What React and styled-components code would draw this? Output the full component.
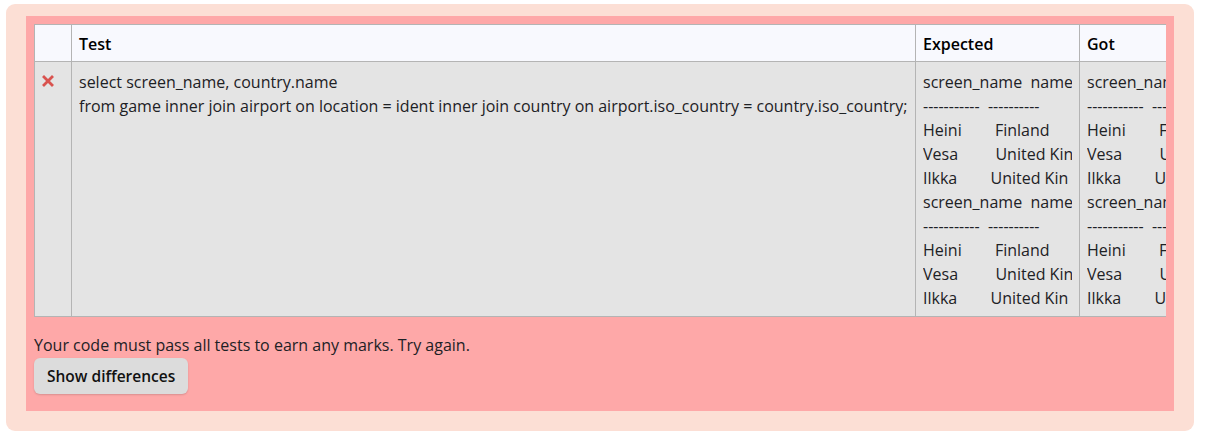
import React from "react";
import styled, { createGlobalStyle } from "styled-components";

const GlobalStyle = createGlobalStyle`
  body {
    margin: 0;
    background: #ffffff;
    font-family: "Open Sans", "DejaVu Sans", sans-serif;
  }
`;

const output = [
  "screen_name  name",
  "-----------  ----------",
  "Heini        Finland",
  "Vesa         United Kin",
  "Ilkka        United Kin",
].join("\n");

const query =
  "select screen_name, country.name\nfrom game inner join airport on location = ident inner join country on airport.iso_country = country.iso_country;";

function CrossIcon() {
  return (
    <svg width="12" height="12" viewBox="0 0 12 12">
      <path
        d="M2 2 L10 10 M10 2 L2 10"
        stroke="#d9534f"
        strokeWidth="2.8"
        strokeLinecap="square"
      />
    </svg>
  );
}

function App() {
  return (
    <>
      <GlobalStyle />
      <Outer>
        <Feedback>
          <TableWrap>
            <Results>
              <colgroup>
                <col style={{ width: 37 }} />
                <col style={{ width: 844 }} />
                <col style={{ width: 164 }} />
                <col style={{ width: 164 }} />
              </colgroup>
              <thead>
                <tr>
                  <Th />
                  <Th>Test</Th>
                  <Th>Expected</Th>
                  <Th>Got</Th>
                </tr>
              </thead>
              <tbody>
                <tr>
                  <Td>
                    <IconCell>
                      <CrossIcon />
                    </IconCell>
                  </Td>
                  <Td>
                    <Pre>{query}</Pre>
                  </Td>
                  <Td>
                    <Pre>{output + "\n" + output}</Pre>
                  </Td>
                  <Td>
                    <Pre>{output + "\n" + output}</Pre>
                  </Td>
                </tr>
              </tbody>
            </Results>
          </TableWrap>
          <Message>Your code must pass all tests to earn any marks. Try again.</Message>
          <Button>Show differences</Button>
        </Feedback>
      </Outer>
    </>
  );
}

export default App;

const Outer = styled.div`
  width: 1188px;
  box-sizing: border-box;
  margin: 4px 0 0 6px;
  padding: 12px 20px 20px 20px;
  background: #fcdfd5;
  border-radius: 9px;
`;

const Feedback = styled.div`
  background: #fea8a8;
  padding: 8px 8px 17px 8px;
  display: flex;
  flex-direction: column;
  align-items: flex-start;
`;

const TableWrap = styled.div`
  width: 100%;
  overflow: hidden;
`;

const Results = styled.table`
  table-layout: fixed;
  width: 1209px;
  border-collapse: collapse;
  font-size: 16px;
  line-height: 24px;
  color: #1d2125;
`;

const Th = styled.th`
  background: #f8f9fe;
  border: 1px solid #b4b4b4;
  padding: 7px 7px 5px 7px;
  text-align: left;
  font-weight: 600;
  color: #000;
`;

const Td = styled.td`
  background: #e4e4e4;
  border: 1px solid #b4b4b4;
  padding: 8px 7px 6px 7px;
  vertical-align: top;
`;

const IconCell = styled.div`
  display: flex;
  padding-top: 5px;
`;

const Pre = styled.div`
  white-space: pre;
  overflow: hidden;
  font-family: "Open Sans", sans-serif;
`;

const Message = styled.div`
  margin-top: 16px;
  font-size: 16px;
  line-height: 24px;
  color: #1d2125;
`;

const Button = styled.button`
  margin-top: 1px;
  height: 36px;
  padding: 0 13px;
  border: none;
  border-radius: 6px;
  background: #dcdcdc;
  box-shadow: 0 1px 2px rgba(0, 0, 0, 0.15);
  font-family: "Open Sans", sans-serif;
  font-size: 15.5px;
  font-weight: 600;
  color: #111;
`;
